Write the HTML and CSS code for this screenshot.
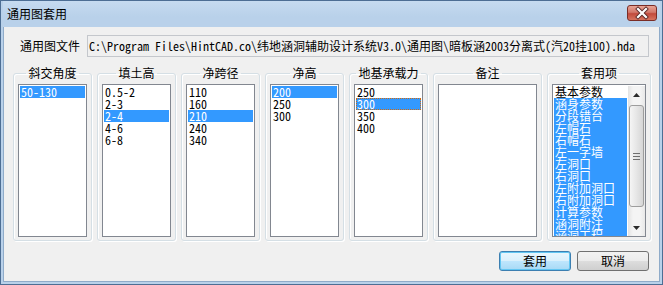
FILE: index.html
```html
<!DOCTYPE html>
<html lang="zh-CN">
<head>
    <meta charset="UTF-8">
    <title>通用图套用</title>
    <link rel="stylesheet" href="styles.css">
</head>
<body>
    <div class="window">
        <div class="titlebar">
            <span class="title">通用图套用</span>
            <span class="close">
                <svg width="30" height="16" viewBox="0 0 30 16">
                    <path d="M11 4 L19 12 M19 4 L11 12" stroke="#5a2a28" stroke-width="4" stroke-linecap="square"/>
                    <path d="M11 4 L19 12 M19 4 L11 12" stroke="#ffffff" stroke-width="2.2" stroke-linecap="square"/>
                </svg>
            </span>
        </div>
        <div class="client">
            <div class="file-row">
                <label class="file-label">通用图文件</label>
                <div class="file-path">C:\Program Files\HintCAD.co\纬地涵洞辅助设计系统V3.0\通用图\暗板涵2003分离式(汽20挂100).hda</div>
            </div>

            <div class="groups">
                <fieldset class="group">
                    <legend>斜交角度</legend>
                    <ul class="list">
                        <li class="sel">50-130</li>
                    </ul>
                </fieldset>
                <fieldset class="group">
                    <legend>填土高</legend>
                    <ul class="list">
                        <li>0.5-2</li>
                        <li>2-3</li>
                        <li class="sel">2-4</li>
                        <li>4-6</li>
                        <li>6-8</li>
                    </ul>
                </fieldset>
                <fieldset class="group">
                    <legend>净跨径</legend>
                    <ul class="list">
                        <li>110</li>
                        <li>160</li>
                        <li class="sel">210</li>
                        <li>240</li>
                        <li>340</li>
                    </ul>
                </fieldset>
                <fieldset class="group">
                    <legend>净高</legend>
                    <ul class="list">
                        <li class="sel">200</li>
                        <li>250</li>
                        <li>300</li>
                    </ul>
                </fieldset>
                <fieldset class="group">
                    <legend>地基承载力</legend>
                    <ul class="list">
                        <li>250</li>
                        <li class="sel focus">300</li>
                        <li>350</li>
                        <li>400</li>
                    </ul>
                </fieldset>
                <fieldset class="group group-note">
                    <legend>备注</legend>
                    <ul class="list"></ul>
                </fieldset>
                <fieldset class="group group-items">
                    <legend>套用项</legend>
                    <div class="list list-scroll">
                        <ul class="items">
                            <li>基本参数</li>
                            <li class="sel">涵身参数</li>
                            <li class="sel">分段错台</li>
                            <li class="sel">左帽石</li>
                            <li class="sel">右帽石</li>
                            <li class="sel">左一字墙</li>
                            <li class="sel">左洞口</li>
                            <li class="sel">右洞口</li>
                            <li class="sel">左附加洞口</li>
                            <li class="sel">右附加洞口</li>
                            <li class="sel">计算参数</li>
                            <li class="sel">涵洞附注</li>
                            <li class="sel">涵洞工程</li>
                        </ul>
                        <div class="scrollbar">
                            <div class="sb-btn">
                                <svg width="7" height="4" viewBox="0 0 7 4"><polygon points="3.5,0 7,4 0,4" fill="#2b2b2b"/></svg>
                            </div>
                            <div class="sb-track">
                                <div class="sb-thumb">
                                    <span class="grip"></span>
                                </div>
                            </div>
                            <div class="sb-btn">
                                <svg width="7" height="4" viewBox="0 0 7 4"><polygon points="0,0 7,0 3.5,4" fill="#2b2b2b"/></svg>
                            </div>
                        </div>
                    </div>
                </fieldset>
            </div>

            <div class="buttons">
                <button type="submit" class="btn btn-default">套用</button>
                <button type="button" class="btn">取消</button>
            </div>
        </div>
    </div>
</body>
</html>
```

FILE: styles.css
```css
body {
    margin: 0;
    font-family: "Noto Sans Mono CJK SC", "DejaVu Sans Mono", "Noto Sans CJK SC", monospace;
    font-size: 12px;
    color: #000;
}

.window {
    width: 663px;
    height: 285px;
    box-sizing: border-box;
    display: flex;
    flex-direction: column;
    background: #b9d1ea;
    border: 1px solid #4d6e94;
    padding: 0 2px 2px 2px;
}

.titlebar {
    height: 26px;
    flex: none;
    display: flex;
    align-items: center;
    padding-left: 4px;
    background: linear-gradient(#c6dbf0, #b9d1ea 60%);
}

.title {
    font-family: "Noto Sans CJK SC", sans-serif;
    font-size: 12px;
    line-height: 12px;
}

.close {
    margin-left: auto;
    margin-right: 3px;
    align-self: flex-start;
    margin-top: 4px;
    width: 30px;
    height: 16px;
    box-sizing: border-box;
    border: 1px solid #7a2d27;
    border-radius: 3px;
    background: linear-gradient(#e8a495, #d2776a 45%, #c24a3c 55%, #d6735f);
    display: flex;
}

.close svg {
    margin: -1px;
}

.client {
    flex: 1;
    background: #f0f0f0;
    border: 1px solid #8fabc9;
    border-top: none;
    display: flex;
    flex-direction: column;
}

.file-row {
    margin-top: 8px;
    height: 22px;
    display: flex;
    align-items: center;
    padding-left: 16px;
}

.file-label {
    font-family: "Noto Sans CJK SC", sans-serif;
    width: 60px;
    margin-right: 7px;
    line-height: 12px;
}

.file-path {
    width: 562px;
    height: 22px;
    box-sizing: border-box;
    border: 1px solid #c4c7cc;
    padding-left: 1px;
    line-height: 20px;
    white-space: nowrap;
    overflow: hidden;
}

.groups {
    margin-top: 10px;
    padding-left: 9px;
    display: flex;
    gap: 5px;
}

.group {
    margin: 0;
    width: 79px;
    height: 174px;
    box-sizing: border-box;
    padding: 5px 4px 3px 4px;
    min-width: 0;
    border: 1px solid #d5dfe5;
    border-radius: 3px;
    box-shadow: inset 1px 1px 0 #ffffff, 1px 1px 0 #ffffff;
    display: flex;
    flex-direction: column;
}

.group-note {
    width: 109px;
}

.group-items {
    width: 104px;
}

.group legend {
    margin: 0 auto;
    padding: 0 2px;
    font-family: "Noto Sans CJK SC", sans-serif;
    line-height: 12px;
}

.list {
    flex: 1;
    margin: 0;
    padding: 1px;
    list-style: none;
    background: #fff;
    border: 1px solid #828790;
    overflow: hidden;
}

.list li {
    height: 12px;
    box-sizing: border-box;
    line-height: 12px;
    padding-left: 1px;
    white-space: nowrap;
}

.list li.sel {
    background: #3399ff;
    color: #fff;
}

.list li.focus {
    border: 1px dotted #d06a10;
    line-height: 10px;
    padding-left: 0;
}

.list-scroll {
    display: flex;
    padding: 1px 0 0 1px;
}

.items {
    flex: 1;
    margin: 0;
    padding: 0 1px 0 0;
    list-style: none;
    overflow: hidden;
    font-family: "Noto Sans CJK SC", sans-serif;
}

.scrollbar {
    width: 17px;
    display: flex;
    flex-direction: column;
    background: linear-gradient(90deg, #e3e3e3, #f4f4f4 30%, #f4f4f4 70%, #e8e8e8);
}

.sb-btn {
    height: 17px;
    flex: none;
    display: flex;
    align-items: center;
    justify-content: center;
}

.sb-track {
    flex: 1;
    display: flex;
    flex-direction: column;
    padding: 2px 0 10px 0;
}

.sb-thumb {
    height: 102px;
    margin: 0 1px;
    box-sizing: border-box;
    border: 1px solid #9d9d9d;
    border-radius: 3px;
    background: linear-gradient(90deg, #f5f5f5, #e6e6e6 50%, #d6d6d6);
    display: flex;
    align-items: center;
    justify-content: center;
}

.grip {
    width: 7px;
    height: 5px;
    border-top: 1px solid #6f6f6f;
    border-bottom: 1px solid #6f6f6f;
    background: linear-gradient(transparent 2px, #6f6f6f 2px, #6f6f6f 3px, transparent 3px);
}

.buttons {
    margin-top: 10px;
    padding-right: 10px;
    display: flex;
    justify-content: flex-end;
    gap: 6px;
}

.btn {
    width: 72px;
    height: 20px;
    padding: 0;
    border: 1px solid #707070;
    border-radius: 3px;
    background: linear-gradient(#f2f2f2, #ebebeb 50%, #dddddd 51%, #cfcfcf);
    font-family: "Noto Sans CJK SC", sans-serif;
    font-size: 12px;
    line-height: 12px;
    color: #000;
}

.btn-default {
    border-color: #3c7fb1;
    box-shadow: inset 0 0 0 1px #62c6f2;
    background: linear-gradient(#eaf6fd, #d9f0fc 50%, #bee6fd 51%, #a7d9f5);
}
```
